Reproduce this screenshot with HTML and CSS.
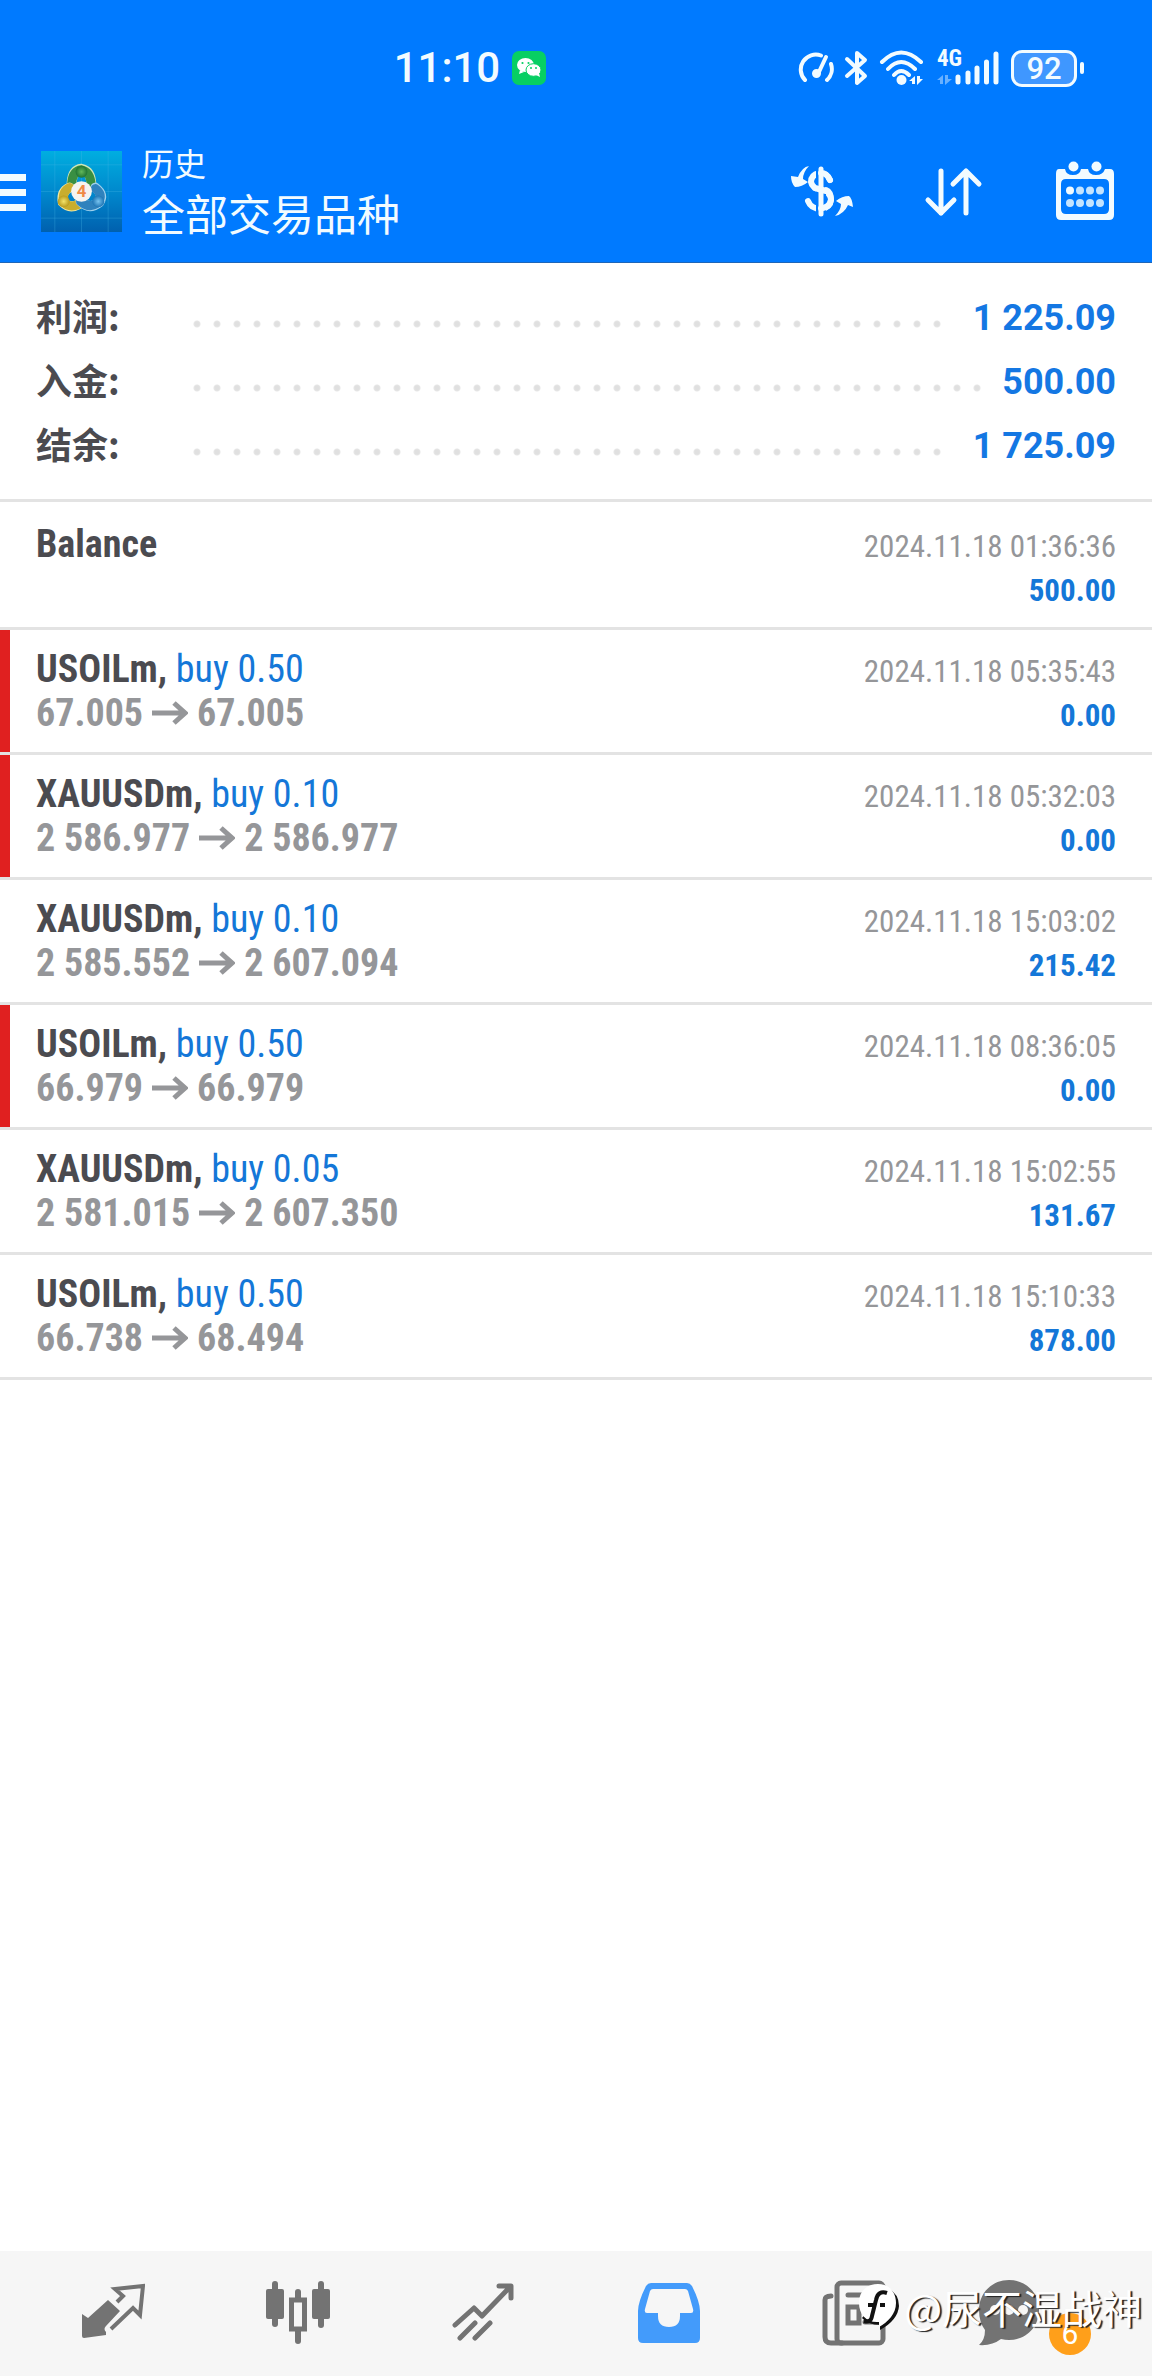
FILE: index.html
```html
<!DOCTYPE html>
<html lang="zh-CN">
<head>
<meta charset="utf-8">
<meta name="viewport" content="width=device-width, initial-scale=1">
<title>历史</title>
<link rel="stylesheet" href="styles.css">
</head>
<body>
<div class="app">
  <header class="header">
    <div class="status">
      <div class="status-group clock">
        <time>11:10</time>
        <svg width="34" height="34" viewBox="0 0 34 34" aria-hidden="true">
          <rect width="34" height="34" rx="7" fill="#07cf63"/>
          <ellipse cx="13.500" cy="14" rx="8.500" ry="7" fill="#fff"/><path d="M8 19l-1 4 5-2z" fill="#fff"/>
          <ellipse cx="21.500" cy="19" rx="7.500" ry="6.300" fill="#fff" stroke="#07cf63"/><path d="M24 24l4 2-1-4z" fill="#fff"/>
          <g fill="#07cf63"><circle cx="10.500" cy="12" r="1.100"/><circle cx="16.500" cy="12" r="1.100"/><circle cx="19" cy="17" r="1"/><circle cx="24" cy="17" r="1"/></g>
        </svg>
      </div>
      <div class="status-group">
        <svg width="36" height="34" viewBox="0 0 36 34" fill="none" stroke="#f2fbff" stroke-width="4" stroke-linecap="round" aria-hidden="true">
          <path d="M7 29A15 15 0 0 1 23 4.500M33 13A15 15 0 0 1 29 29"/><path d="M28 6L20 23"/><circle cx="18.500" cy="22.500" r="2.500" fill="#f2fbff"/>
        </svg>
        <svg class="bluetooth" width="24" height="36" viewBox="0 0 24 36" fill="none" stroke="#f2fbff" stroke-width="4" stroke-linecap="round" stroke-linejoin="round" aria-hidden="true">
          <path d="M3 9L21 26 13 33V3L21 10 3 26"/>
        </svg>
        <svg class="wifi" width="46" height="36" viewBox="0 0 46 36" aria-hidden="true">
          <g fill="none" stroke="#f2fbff" stroke-width="4" stroke-linecap="round"><path d="M3 12Q22 -7 42 12M9 19Q22 5 36 19M15 25Q22 17 30 25"/></g>
          <circle cx="22.500" cy="30" r="5" fill="#f2fbff"/>
          <path d="M30 31L36 26V34H33V31zM38 26H41V29H44L38 35z" fill="#f2fbff"/>
        </svg>
        <div class="cell-signal">
          <span class="network">4G</span>
          <svg width="62" height="36" viewBox="0 0 62 36" aria-hidden="true">
            <path d="M0 30L6 25V34H3V30zM8 25H11V29H15L8 35z" fill="#69b1ff"/>
            <g stroke="#f2fbff" stroke-width="5" stroke-linecap="round"><path d="M21 27V32M31 23V32M40 18V32M49.500 12V32M59 4V32"/></g>
          </svg>
        </div>
        <div class="battery"><span>92</span></div>
        <i class="battery-tip"></i>
      </div>
    </div>
    <div class="toolbar">
      <button class="menu" aria-label="菜单"><i></i><i></i><i></i></button>
      <svg class="logo" width="81" height="81" viewBox="0 0 82 82" aria-hidden="true">
        <defs>
          <linearGradient id="sky" x2="0" y2="1"><stop stop-color="#00aee0"/><stop offset=".55" stop-color="#0085cb"/><stop offset="1" stop-color="#0060ae"/></linearGradient>
          <radialGradient id="green"><stop stop-color="#63b95a"/><stop offset="1" stop-color="#1f7434"/></radialGradient>
          <radialGradient id="gold"><stop stop-color="#f3e36a"/><stop offset="1" stop-color="#b89a1c"/></radialGradient>
          <radialGradient id="blue"><stop stop-color="#79c4ef"/><stop offset="1" stop-color="#1c74b4"/></radialGradient>
        </defs>
        <rect width="82" height="82" fill="url(#sky)"/>
        <path d="M14 0V82M41 0V82M68 0V82M0 14H82M0 41H82M0 68H82" stroke="#47b9e7" stroke-opacity=".3"/>
        <g fill="none" stroke-linecap="round">
          <path d="M31 32Q32 19 41 18Q51 20 51 35" stroke="#cfe6b8" stroke-width="10"/>
          <path d="M31 33Q32 20 41 19Q50 21 51 35" stroke="#398f42" stroke-width="9"/>
          <path d="M29 37Q20 41 22 52Q29 59 38 54" stroke="#efe7a0" stroke-width="10"/>
          <path d="M29 37Q21 41 23 52Q29 58 38 54" stroke="#c8ad2e" stroke-width="9"/>
          <path d="M55 37Q64 44 59 52Q49 60 40 51" stroke="#9fd0ec" stroke-width="10"/>
          <path d="M55 38Q63 44 58 52Q49 59 40 51" stroke="#2f82bd" stroke-width="9"/>
        </g>
        <circle cx="41" cy="21" r="6" fill="url(#green)"/><circle cx="23" cy="51" r="6" fill="url(#gold)"/><circle cx="58" cy="51" r="6" fill="url(#blue)"/>
        <circle cx="41" cy="41" r="10.500" fill="#f5f3ef"/>
        <text x="41" y="47" text-anchor="middle" class="logo-mark">4</text>
      </svg>
      <div class="titles"><span class="subtitle">历史</span><h1>全部交易品种</h1></div>
      <div class="actions">
        <button aria-label="货币">
          <svg width="62" height="60" viewBox="0 0 62 60" aria-hidden="true">
            <path d="M39 19Q35 11 28 12Q20 14 20 21Q21 27 30 29Q40 31 40 39Q39 47 30 48Q20 48 17 40" fill="none" stroke="#f2fbff" stroke-width="6" stroke-linecap="round"/>
            <path d="M30 6V55" stroke="#007aff" stroke-width="10"/><path d="M35 29Q40 31 40 39Q39 46 30 47.500M30 12Q36 12 39 19M24 27L35 30" fill="none" stroke="#f2fbff" stroke-width="6" stroke-linecap="round"/>
            <path d="M30 8V53" stroke="#f2fbff" stroke-width="5" stroke-linecap="round"/>
            <path d="M18 5Q11 6 7 16L0 15Q0 22 4 26Q11 26 17 21L12 18Q12 11 18 5zM44 55Q53 53 57 44L62 46Q61 37 58 35Q51 35 45 40L50 43Q50 49 44 55z" fill="#f2fbff"/>
          </svg>
        </button>
        <button aria-label="排序">
          <svg width="60" height="60" viewBox="0 0 60 60" fill="none" stroke="#f2fbff" stroke-width="5" stroke-linecap="round" stroke-linejoin="round" aria-hidden="true"><path d="M17 10V52M4 39L17 52 30 39M42 52V10M29 23L42 10 55 23"/></svg>
        </button>
        <button aria-label="日历">
          <svg width="60" height="60" viewBox="0 0 60 60" aria-hidden="true">
            <path fill-rule="evenodd" d="M4 8H10Q11 14 18 14Q25 14 26 8H33Q34 14 41 14Q48 14 50 8H55Q59 8 59 13V54Q59 59 54 59H6Q1 59 1 54V13Q1 8 4 8zM11 18Q6 18 6 23V48Q6 53 11 53H49Q54 53 54 48V23Q54 18 49 18z" fill="#f2fbff"/>
            <g fill="#f2fbff"><circle cx="18.500" cy="5.500" r="5"/><circle cx="41.500" cy="5.500" r="5"/><circle cx="15" cy="29.500" r="4"/></g>
            <g fill="#c4e4ff"><circle cx="25" cy="29.500" r="4"/><circle cx="35" cy="29.500" r="4"/><circle cx="45" cy="29.500" r="4"/><circle cx="15" cy="42" r="4"/><circle cx="25" cy="42" r="4"/><circle cx="35" cy="42" r="4"/><circle cx="45" cy="42" r="4"/></g>
          </svg>
        </button>
      </div>
    </div>
  </header>

  <main>
    <dl class="summary">
      <div><dt>利润:</dt><dd>1 225.09</dd></div>
      <div><dt>入金:</dt><dd>500.00</dd></div>
      <div><dt>结余:</dt><dd>1 725.09</dd></div>
    </dl>
    <svg width="0" height="0" aria-hidden="true"><symbol id="arrow" viewBox="0 0 36 24"><path d="M0 12H33M22 2L33 12 22 22" fill="none" stroke="#959699" stroke-width="5"/></symbol></svg>
    <ul class="deals">
      <li class="deposit"><div><p class="name"><b>Balance</b></p></div><div class="result"><time>2024.11.18 01:36:36</time><b>500.00</b></div></li>
      <li class="stopped"><div><p class="name"><b>USOILm,</b> buy 0.50</p><p class="prices">67.005<svg><use href="#arrow"/></svg>67.005</p></div><div class="result"><time>2024.11.18 05:35:43</time><b>0.00</b></div></li>
      <li class="stopped"><div><p class="name"><b>XAUUSDm,</b> buy 0.10</p><p class="prices">2 586.977<svg><use href="#arrow"/></svg>2 586.977</p></div><div class="result"><time>2024.11.18 05:32:03</time><b>0.00</b></div></li>
      <li><div><p class="name"><b>XAUUSDm,</b> buy 0.10</p><p class="prices">2 585.552<svg><use href="#arrow"/></svg>2 607.094</p></div><div class="result"><time>2024.11.18 15:03:02</time><b>215.42</b></div></li>
      <li class="stopped"><div><p class="name"><b>USOILm,</b> buy 0.50</p><p class="prices">66.979<svg><use href="#arrow"/></svg>66.979</p></div><div class="result"><time>2024.11.18 08:36:05</time><b>0.00</b></div></li>
      <li><div><p class="name"><b>XAUUSDm,</b> buy 0.05</p><p class="prices">2 581.015<svg><use href="#arrow"/></svg>2 607.350</p></div><div class="result"><time>2024.11.18 15:02:55</time><b>131.67</b></div></li>
      <li><div><p class="name"><b>USOILm,</b> buy 0.50</p><p class="prices">66.738<svg><use href="#arrow"/></svg>68.494</p></div><div class="result"><time>2024.11.18 15:10:33</time><b>878.00</b></div></li>
    </ul>
  </main>

  <nav class="tabs">
    <a href="#quotes" aria-label="行情"><svg width="64" height="64" viewBox="0 0 64 64" aria-hidden="true">
      <path d="M27 19L39 30 25 45Q22 48 25 51L25 54 3 57Q1 57 1 55V33L7 37z" fill="#737373"/>
      <path d="M36 21L42 15 34 8 62 5 59 34 52 27 30 48" fill="none" stroke="#737373" stroke-width="4"/></svg></a>
    <a href="#chart" aria-label="图表"><svg width="66" height="64" viewBox="0 0 66 64" aria-hidden="true">
      <g fill="#737373"><rect x="1" y="8" width="18" height="30" rx="2"/><rect x="47" y="8" width="18" height="30" rx="2"/><rect x="7" y="0" width="6" height="46" rx="3"/><rect x="53" y="0" width="6" height="47" rx="3"/><rect x="30" y="8" width="6" height="55" rx="3"/></g>
      <rect x="26.500" y="19" width="13" height="29" fill="#f6f6f6" stroke="#737373" stroke-width="5"/></svg></a>
    <a href="#trade" aria-label="交易"><svg width="62" height="60" viewBox="0 0 62 60" fill="none" stroke="#737373" stroke-width="5" stroke-linecap="round" stroke-linejoin="round" aria-hidden="true"><path d="M3 42L22 25 30 33 58 4M47 3H59V15M8 55L23 40M23 55L38 40"/></svg></a>
    <a href="#history" aria-label="历史" aria-current="page"><svg width="62" height="60" viewBox="0 0 62 60" aria-hidden="true">
      <path fill-rule="evenodd" d="M13 0H49Q52 0 54 3Q62 19 62 28V55Q62 60 57 60H5Q0 60 0 55V28Q0 19 8 3Q10 0 13 0zM15 6Q13 6 12 8L7 26Q6 30 9 30H20V33Q20 44 31 44Q42 44 42 33V30H53Q56 30 55 26L50 8Q49 6 47 6z" fill="#439bfb"/></svg></a>
    <a href="#news" aria-label="新闻"><svg width="64" height="66" viewBox="0 0 64 66" fill="none" stroke="#737373" stroke-width="5" aria-hidden="true"><rect x="15" y="3" width="46" height="60" rx="4"/><path d="M9 16Q3 16 3 20V57Q3 63 9 63H20M26 15H52M43 33H54M43 42H54" stroke-linecap="round"/><path d="M26 27H37V43H26z"/></svg></a>
    <a href="#messages" aria-label="消息"><svg width="62" height="66" viewBox="0 0 62 66" aria-hidden="true"><path d="M31 0C48 0 61 13 61 30S48 60 31 60Q27 60 23 59Q14 66 1 65Q7 60 7 50Q1 42 1 30C1 13 14 0 31 0z" fill="#737373"/><g fill="#f6f6f6"><circle cx="17" cy="30" r="5"/><circle cx="31" cy="30" r="5"/><circle cx="45" cy="30" r="5"/></g></svg><span class="badge">6</span></a>
    <div class="watermark"><svg width="42" height="50" viewBox="0 0 42 50" aria-hidden="true">
      <path d="M30 6Q41 12 41 24Q40 38 22 48L22 43Q10 43 4 36z" fill="#111"/>
      <path d="M20 2C31 2 38 10 38 21C38 32 30 40 21 45V40C9 41 1 33 1 21S9 2 20 2z" fill="#fff"/>
      <path d="M29 11Q20 8 18 18L14 34Q13 41 6 39M10 23H16M22 23H27" fill="none" stroke="#111" stroke-width="4"/></svg><span>@尿不湿战神</span></div>
  </nav>
</div>
</body>
</html>
```
FILE: styles.css
```css
* { box-sizing: border-box; }

body {
  margin: 0;
  background: #fff;
  color: #4b4b50;
  font-family: Roboto, "Noto Sans CJK SC", sans-serif;
}

button { padding: 0; border: 0; background: none; }
svg { display: block; flex: none; }
p, h1, dl, dd, ul { margin: 0; padding: 0; }

.app { display: flex; flex-direction: column; min-height: 100vh; }
main { flex: 1; }

/* Header */
.header {
  border-bottom: 1px solid #1e66b8;
  background: #007aff;
  color: #f2fbff;
}

.status {
  display: flex;
  align-items: center;
  justify-content: space-between;
  height: 136px;
  padding: 0 68px 0 34%;
}

.status-group { display: flex; align-items: center; }
.clock { gap: 12px; padding-left: 2px; font-size: 42px; font-weight: 500; line-height: 52px; }
.bluetooth { margin-left: 10px; }
.wifi { margin-left: 11px; }

.cell-signal { position: relative; margin-left: 12px; }
.network {
  position: absolute;
  top: -1px;
  left: 0;
  font: bold 23px/20px "Roboto Condensed", Roboto, sans-serif;
}

.battery {
  display: flex;
  align-items: center;
  justify-content: center;
  width: 66px;
  height: 37px;
  margin-left: 12px;
  border: 3px solid #f2fbff;
  border-radius: 11px;
  background: #3f97ff;
  font-size: 31px;
  font-weight: 500;
  line-height: 31px;
}
.battery-tip { width: 4px; height: 12px; margin-left: 3px; border-radius: 2px; background: #f2fbff; }

.toolbar { display: flex; align-items: flex-start; height: 126px; padding-right: 37px; }
.menu { display: grid; gap: 8px; width: 26px; margin: 38px 15px 0 0; }
.menu i { height: 7px; background: #f2fbff; }
.logo { margin-top: 15px; }
.logo-mark { font: bold 17px Roboto, sans-serif; fill: #ef8a45; }
.titles { margin: 4px 0 0 20px; font-family: "Noto Sans CJK SC", sans-serif; }
.subtitle { display: block; font-size: 32px; line-height: 44px; }
.titles h1 { font-size: 43px; font-weight: 400; line-height: 56px; }
.actions { display: flex; gap: 71px; margin: 25px 0 0 auto; }

/* Account summary */
.summary { padding: 22px 36px; border-bottom: 3px solid #e3e3e3; }
.summary > div { display: flex; align-items: center; height: 64px; font-size: 36px; font-weight: 700; line-height: 60px; }
.summary dt { width: 151px; padding-bottom: 4px; font-family: "Noto Sans CJK SC", sans-serif; }
.summary dd { display: flex; flex: 1; align-items: center; padding-top: 2px; color: #1477e3; }
.summary dd::before {
  flex: 1;
  height: 20px;
  margin: 12px 20px 0 0;
  background: radial-gradient(circle, #e0e0e0 2px, #e6e6e6 3px, transparent 4px) 0 0 / 20px 20px;
  content: "";
}

/* Deals */
.deals { list-style: none; font-family: "Roboto Condensed", Roboto, sans-serif; }
.deals li {
  display: flex;
  justify-content: space-between;
  height: 125px;
  padding: 17px 36px 0;
  border-bottom: 3px solid #e3e3e3;
  line-height: 44px;
}
.deals .deposit { height: 128px; padding-top: 20px; }
.deals .stopped { background: linear-gradient(#e02020, #e02020) 0 0 / 10px 100% no-repeat; }
.name, .prices { font-size: 38px; white-space: nowrap; }
.name { color: #1477d8; }
.name b { color: #4b4b50; }
.prices { display: flex; align-items: center; color: #959699; font-weight: 700; }
.prices svg { width: 36px; height: 24px; margin: 0 9px; }
.result { display: flex; flex-direction: column; align-items: flex-end; padding-top: 3px; color: #959699; font-size: 31px; }
.result b { color: #1477d8; }

/* Bottom navigation */
.tabs {
  position: relative;
  display: grid;
  grid-template-columns: repeat(6, 1fr);
  height: 125px;
  padding: 0 20px;
  background: #f6f6f6;
}
.tabs a { display: flex; align-items: center; justify-content: center; padding-bottom: 2px; text-decoration: none; }
.tabs a:nth-of-type(6) { padding-right: 10px; }
.badge {
  width: 42px;
  height: 42px;
  margin: 42px 0 0 9px;
  border-radius: 50%;
  background: #ff9f1a;
  color: #fff;
  font-size: 30px;
  line-height: 42px;
  text-align: center;
}
.watermark {
  position: absolute;
  right: 10px;
  bottom: 39px;
  display: flex;
  align-items: center;
  gap: 4px;
  color: #fff;
  font: 40px/60px "Noto Sans CJK SC", sans-serif;
  text-shadow: 2px 1px 1px #222;
  pointer-events: none;
}
```
